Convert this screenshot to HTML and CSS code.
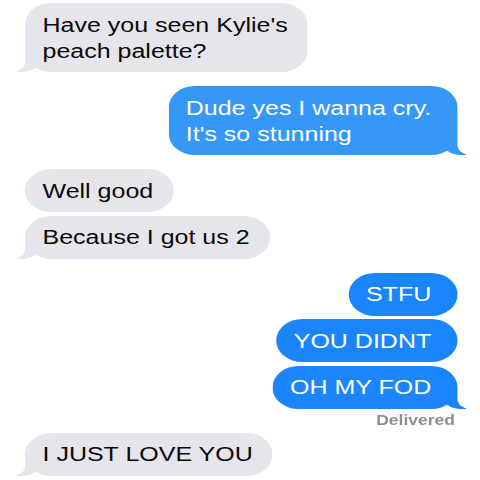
FILE: index.html
```html
<!DOCTYPE html>
<html lang="en">
<head>
<meta charset="utf-8">
<title>Messages</title>
<link rel="stylesheet" href="styles.css">
</head>
<body>
<main class="chat">
  <div class="bubble received tail">Have you seen Kylie's<br>peach palette?</div>
  <div class="bubble sent light tail gap">Dude yes I wanna cry.<br>It's so stunning</div>
  <div class="bubble received gap">Well good</div>
  <div class="bubble received tail">Because I got us 2</div>
  <div class="bubble sent gap">STFU</div>
  <div class="bubble sent">YOU DIDNT</div>
  <div class="bubble sent tail">OH MY FOD</div>
  <div class="status">Delivered</div>
  <div class="bubble received tail">I JUST LOVE YOU</div>
</main>
</body>
</html>
```

FILE: styles.css
```css
html, body {
  margin: 0;
  padding: 0;
  background: #ffffff;
  overflow: hidden;
}

.chat {
  width: 384px;
  box-sizing: border-box;
  padding: 3px 18px 0 20px;
  display: flex;
  flex-direction: column;
  gap: 3.5px;
  transform: scaleX(1.25);
  transform-origin: 0 0;
  font-family: "Liberation Sans", Arial, sans-serif;
  font-size: 20px;
  line-height: 26px;
}

.bubble {
  position: relative;
  padding: 8.5px 16px 8.5px 14px;
  border-radius: 21px;
}

.gap {
  margin-top: 10.5px;
}

.received {
  align-self: flex-start;
  background: #e6e5eb;
  color: #0a0a0a;
}

.sent {
  align-self: flex-end;
  background: #1b85fb;
  color: #ffffff;
  padding-right: 21px;
}

.sent.light {
  background: #3597f6;
}

.received.tail::before,
.sent.tail::before {
  content: "";
  position: absolute;
  bottom: 0;
  width: 20px;
  height: 20px;
  background: inherit;
}

.received.tail::after,
.sent.tail::after {
  content: "";
  position: absolute;
  bottom: 0;
  width: 10px;
  height: 20px;
  background: #ffffff;
}

.received.tail::before {
  left: -7px;
  border-bottom-right-radius: 15px;
}

.received.tail::after {
  left: -10px;
  border-bottom-right-radius: 10px;
}

.sent.tail::before {
  right: -7px;
  border-bottom-left-radius: 15px;
}

.sent.tail::after {
  right: -10px;
  border-bottom-left-radius: 10px;
}

.status {
  align-self: flex-end;
  margin-right: 2px;
  font-size: 14px;
  font-weight: bold;
  line-height: 17px;
  color: #8e8e93;
}
```
